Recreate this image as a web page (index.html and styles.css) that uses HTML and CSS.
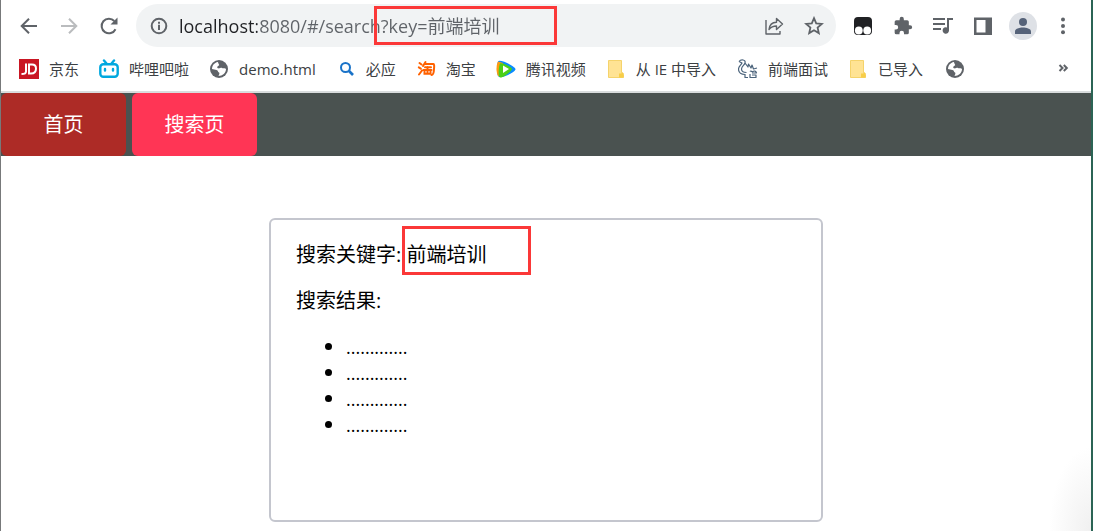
FILE: index.html
```html
<!DOCTYPE html>
<html lang="zh-CN">
<head>
<meta charset="utf-8">
<title>搜索页</title>
<link rel="stylesheet" href="styles.css">
</head>
<body>
<div class="window">
  <div class="toolbar">
    <button class="tool" aria-label="后退"><svg viewBox="0 0 20 20"><path class="line" d="M18 10H3M10 2.700 2.700 10l7.300 7.300"/></svg></button>
    <button class="tool disabled" aria-label="前进"><svg viewBox="0 0 20 20"><path class="line" d="M2 10h15M10 2.700 17.300 10 10 17.300"/></svg></button>
    <button class="tool" aria-label="刷新"><svg viewBox="0 0 20 20"><path class="line" d="M16.500 13.200A7.300 7.300 0 1 1 15.300 5"/><path d="M18.500 1.500V8.500H11.500z"/></svg></button>
    <div class="address">
      <svg class="info" viewBox="0 0 18 18"><circle class="line" cx="9" cy="9" r="7.300"/><path d="M8 7.800h2V13H8zM8 4.800h2v2H8z"/></svg>
      <input class="url" type="text" aria-label="地址" value="localhost:8080/#/search?key=前端培训">
      <button class="tool" aria-label="分享"><svg viewBox="0 0 20 20"><path class="thin" d="M2 4v14h14v-3M5 13.500C5.500 9 8 6.500 12.500 6.300V2.500L18.500 8l-6 5.500V10C9 10 7 11 5 13.500z"/></svg></button>
      <button class="tool" aria-label="收藏"><svg viewBox="0 0 20 20"><path class="star" d="m10 2.200 2.200 5.200 5.600.500-4.200 3.700 1.200 5.500-4.800-2.900-4.800 2.900 1.200-5.500-4.200-3.700 5.600-.500z"/></svg></button>
      <span class="highlight highlight-url"></span>
    </div>
    <div class="extensions">
      <button class="tool" aria-label="扩展"><svg viewBox="0 0 20 20"><rect x="1" y="1" width="18" height="18" rx="4" fill="#202124"/><circle cx="5.800" cy="14.500" r="3.900" fill="#fff"/><circle cx="14.200" cy="14.500" r="3.900" fill="#fff"/></svg></button>
      <button class="tool" aria-label="扩展程序"><svg viewBox="0 0 24 24"><path d="M20.500 11H19V7a2 2 0 0 0-2-2h-4V3.500a2.500 2.500 0 0 0-5 0V5H4a2 2 0 0 0-2 2v3.800h1.500a2.700 2.700 0 0 1 0 5.400H2V20a2 2 0 0 0 2 2h3.800v-1.500a2.700 2.700 0 0 1 5.400 0V22H17a2 2 0 0 0 2-2v-4h1.500a2.500 2.500 0 0 0 0-5z"/></svg></button>
      <button class="tool" aria-label="媒体控制"><svg viewBox="0 0 20 20"><path d="M0 2h12v2H0zM0 7h12v2H0zM0 12h8v2H0zM14 2h6v2h-4v10.500a3.200 3.200 0 1 1-2-3z"/></svg></button>
      <button class="tool" aria-label="侧边栏"><svg viewBox="0 0 20 20"><path fill-rule="evenodd" d="M1 1.500h18v17.500H1zM3.500 4v12.500h9V4z"/></svg></button>
      <button class="tool avatar" aria-label="个人资料"><svg viewBox="0 0 28 28"><circle cx="14" cy="14" r="14" fill="#dee1e6"/><circle cx="14" cy="10" r="4" fill="#566379"/><path fill="#566379" d="M6 22v-2.500C6 16.500 11 15.500 14 15.500s8 1 8 4V22z"/></svg></button>
      <button class="tool" aria-label="菜单"><svg viewBox="0 0 20 20"><circle cx="10" cy="3.500" r="2"/><circle cx="10" cy="10" r="2"/><circle cx="10" cy="16.300" r="2"/></svg></button>
    </div>
  </div>

  <nav class="bookmarks" aria-label="书签">
    <a href="#"><svg viewBox="0 0 20 20"><path fill="#c91623" d="M0 0h20v20H0z"/><path fill="none" stroke="#fff" stroke-width="2" d="M7 4.500v8q0 2.500-4.500 2.500M10 5.500v9h2c3 0 5-1.700 5-5 0-2.500-1.500-4-4-4z"/></svg>京东</a>
    <a href="#"><svg viewBox="0 0 20 20"><g fill="none" stroke="#00a8df" stroke-width="2.400" stroke-linecap="round"><rect x="1.300" y="5.200" width="17.400" height="12.600" rx="3"/><path d="m5 1.500 2.500 3M15 1.500l-2.500 3M6 10v1.500M14 10v1.500"/></g></svg>哔哩吧啦</a>
    <a href="#"><svg viewBox="0 0 20 20"><circle cx="10" cy="10" r="9" fill="#5f6368"/><path fill="#fff" d="M9 3c-4 .5-6 4-6 7l4.500 1c2 .500 1 2 2.500 2.500 1 .500 0 2-.500 3.500 4 0 7.500-3 7.500-7-1-1.500-3 0-4-1-.800-1-2.500 1-4 .300C7.300 8.300 9 7 9.800 6.500 11 6 9 4.500 9 3z"/></svg>demo.html</a>
    <a href="#"><svg viewBox="0 0 20 20"><g fill="none" stroke="#1a73c8" stroke-width="2"><circle cx="9.500" cy="8.500" r="4.500"/><path stroke-width="2.600" d="m13 12 4 4"/></g></svg>必应</a>
    <a href="#"><svg viewBox="0 0 20 20"><g fill="none" stroke="#ff6100" stroke-width="2" stroke-linecap="round"><path d="m3.500 4 2 1.500M2.800 8.300l2 1.300M3 15.500l3-4M9.500 3 7 7M9 5h8.500q1 0 .500 5-.200 6-2.500 6M9 8.200h6M7.500 11h8M11.500 8v6M8.500 12.500v2.200h6v-2.200"/></g></svg>淘宝</a>
    <a href="#"><svg viewBox="0 0 20 20"><path fill="#0a8bff" d="M2 2.500C3-.5 19 7 19.500 10S5 20 2.500 17.500 1 5 2 2.500z"/><path fill="#ff9a10" d="M2 2.500C0 6 0 14 2.200 17.300L7 16V4z"/><path fill="#4bcf18" d="M4 4.500c2-1 12 3.500 12 5.500S6.500 19.500 4 18.500 3 6 4 4.500z"/><path fill="#fff" d="M7 6.500 13 10l-6 4z"/></svg>腾讯视频</a>
    <a class="folder" href="#"><svg viewBox="0 0 20 20"><path fill="#ffe394" stroke="#f5d36b" d="M2.500 1.500h13v12q2 0 2 2v3h-15z"/><path fill="#f8ce48" d="M13 14.500h2.500v-1q2 0 2 2v3H13z"/></svg>从 IE 中导入</a>
    <a href="#"><svg viewBox="0 0 20 20"><g fill="none" stroke="#4b637b" stroke-width="1.200" stroke-linejoin="round"><path d="M1 2.500C3 0 8 .500 7 4 6.500 6 3.500 7.500 3.500 10c0 2 2 3.500 5 3.500M1 2.500l3 1.500C3 6 .500 7.500.500 10c0 4 3 5.500 6.500 5.500M7 4l3 4 .500-3 2.500 4 1-3 1.500 4 3.500-1M12 12.500c1-1.500 2 1 3 0s3-.500 3.500 1.500H14M7 15v3.500h3M12 15v3.500h6V16h-4"/></g></svg>前端面试</a>
    <a class="folder" href="#"><svg viewBox="0 0 20 20"><path fill="#ffe394" stroke="#f5d36b" d="M2.500 1.500h13v12q2 0 2 2v3h-15z"/><path fill="#f8ce48" d="M13 14.500h2.500v-1q2 0 2 2v3H13z"/></svg>已导入</a>
    <a href="#" aria-label="网页"><svg viewBox="0 0 20 20"><circle cx="10" cy="10" r="9" fill="#5f6368"/><path fill="#fff" d="M9 3c-4 .5-6 4-6 7l4.500 1c2 .500 1 2 2.500 2.500 1 .500 0 2-.500 3.500 4 0 7.500-3 7.500-7-1-1.500-3 0-4-1-.800-1-2.500 1-4 .300C7.300 8.300 9 7 9.800 6.500 11 6 9 4.500 9 3z"/></svg></a>
    <button class="tool more" aria-label="更多书签"><svg viewBox="0 0 20 20"><path class="more-line" d="m6.500 6 3 3-3 3M10.800 6l3 3-3 3"/></svg></button>
  </nav>

  <header class="site-nav">
    <a class="tab" href="#/">首页</a>
    <a class="tab active" href="#/search">搜索页</a>
  </header>

  <main class="page">
    <section class="card">
      <p>搜索关键字: <span class="keyword">前端培训<span class="highlight highlight-key"></span></span></p>
      <p>搜索结果:</p>
      <ul class="results">
        <li><span>.............</span></li>
        <li><span>.............</span></li>
        <li><span>.............</span></li>
        <li><span>.............</span></li>
      </ul>
    </section>
  </main>
</div>
</body>
</html>
```
FILE: styles.css
```css
* { box-sizing: border-box; }

body {
  margin: 0;
  background: #fff;
  color: #000;
  font-family: "Open Sans", "Noto Sans CJK SC", sans-serif;
  font-size: 20px;
  line-height: 26px;
}

.window {
  display: flex;
  flex-direction: column;
  min-height: 100vh;
  border-left: 1px solid #77797a;
  border-right: 2px solid #2b6455;
}

svg { display: block; fill: currentColor; }

.line { fill: none; stroke: currentColor; stroke-width: 2; }
.thin { fill: none; stroke: currentColor; stroke-width: 1.4; stroke-linejoin: round; }
.star { fill: none; stroke: currentColor; stroke-width: 1.8; }
.more-line { fill: none; stroke: currentColor; stroke-width: 2; }

.tool {
  flex: none;
  width: 20px;
  height: 20px;
  padding: 0;
  border: 0;
  background: none;
  color: #5f6368;
}

.disabled { color: #babcbe; }

.toolbar {
  display: flex;
  align-items: center;
  gap: 20px;
  padding: 4px 18px 0;
}

.address {
  position: relative;
  display: flex;
  flex: 1;
  align-items: center;
  gap: 20px;
  height: 43px;
  margin-left: -3px;
  padding: 0 12px 0 14px;
  border-radius: 22px;
  background: #f1f3f4;
  color: #5f6368;
}

.info { flex: none; width: 18px; height: 18px; }

.url {
  flex: 1;
  min-width: 0;
  margin-left: -9px;
  padding: 0;
  border: 0;
  outline: 0;
  background: linear-gradient(90deg, #202124 78px, #5f6368 78px);
  background-clip: text;
  color: #5f6368;
  -webkit-text-fill-color: transparent;
  font: inherit;
  font-size: 18px;
}

.extensions {
  display: flex;
  align-items: center;
  gap: 20px;
  margin-left: -3px;
}

.avatar { width: 28px; height: 28px; margin: 0 -4px; }

.bookmarks {
  display: flex;
  align-items: center;
  gap: 20px;
  height: 46px;
  padding: 0 18px;
  border-bottom: 2px solid #d9dcdd;
  font-size: 15px;
}

.bookmarks a {
  display: flex;
  flex: none;
  align-items: center;
  gap: 10px;
  color: #3c4043;
  text-decoration: none;
}

.bookmarks .folder { padding-right: 2px; }

.bookmarks svg { width: 20px; height: 20px; }

.more { margin-left: auto; }

.site-nav {
  display: flex;
  gap: 6px;
  background: #4a5250;
}

.tab {
  width: 125px;
  height: 63px;
  border-radius: 6px;
  background: #ad2b26;
  color: #fff;
  line-height: 64px;
  text-align: center;
  text-decoration: none;
}

.tab.active { background: #ff3555; }

.page {
  flex: 1;
  padding: 62px 16px 9px;
  background: radial-gradient(ellipse 42px 84px at 100% 100%, #f0f0f0, #fff) no-repeat;
}

.card {
  width: min(554px, 100%);
  min-height: 304px;
  margin: 0 auto;
  padding: 22px 25px;
  border: 2px solid #c4c6ce;
  border-radius: 6px;
  background: #fff;
}

.card p { margin: 0 0 20px; }

.keyword { position: relative; }

.results {
  margin: 0;
  padding-left: 50px;
}

.results span { font-size: 18px; }

.highlight {
  position: absolute;
  border: 3px solid #fb3838;
  pointer-events: none;
}

.highlight-url { top: 2px; left: 238px; width: 183px; height: 39px; }
.highlight-key { top: -15px; left: -4px; width: 129px; height: 49px; }
```
